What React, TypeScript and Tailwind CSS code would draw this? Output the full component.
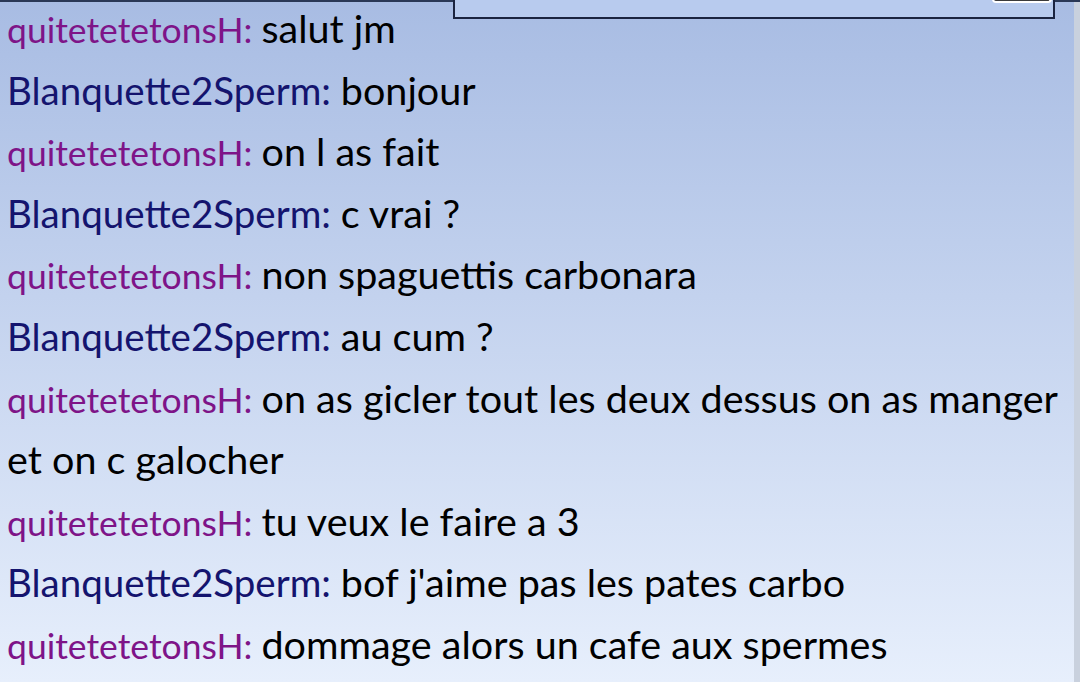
import React from 'react'

type Line = { who: 'q' | 'b' | null; text: string }

const lines: Line[] = [
  { who: 'q', text: 'salut jm' },
  { who: 'b', text: 'bonjour' },
  { who: 'q', text: 'on l as fait' },
  { who: 'b', text: 'c vrai ?' },
  { who: 'q', text: 'non spaguettis carbonara' },
  { who: 'b', text: 'au cum ?' },
  { who: 'q', text: 'on as gicler tout les deux dessus on as manger et on c galocher' },
  { who: 'q', text: 'tu veux le faire a 3' },
  { who: 'b', text: "bof j'aime pas les pates carbo" },
  { who: 'q', text: 'dommage alors un cafe aux spermes' },
]

const names = {
  q: { label: 'quitetetetonsH', cls: 'text-[#7e1488] text-[35.5px] leading-none' },
  b: { label: 'Blanquette2Sperm', cls: 'text-[#14146e] text-[38.5px] leading-none' },
}

export default function App() {
  return (
    <div className="relative w-[1080px] h-[682px] overflow-hidden flex bg-gradient-to-b from-[#a8bce3] to-[#e7effc] font-['Lato',sans-serif]">
      {/* top edge of the window + cut-off input box */}
      <div className="absolute left-0 top-0 w-full h-[2px] bg-[#2a3856]" />
      <div className="absolute left-[453px] top-[-4px] w-[602px] h-[23px] border-2 border-[#1b2440] bg-[#b8cbee]">
        <div className="absolute right-[1px] top-0 w-[60px] h-[5px] rounded-b-sm border-2 border-t-0 border-white bg-[#3a3a3a]" />
      </div>

      <div className="flex-1 -mt-[3px] pl-[7px] pr-[6px] text-[39.5px] leading-[61.6px] text-black">
        {lines.map((l, i) => (
          <div key={i}>
            {l.who && <span className={names[l.who].cls}>{names[l.who].label}: </span>}
            {l.text}
          </div>
        ))}
      </div>
      <div className="w-[6px] bg-[#c9d1de]" />
    </div>
  )
}
